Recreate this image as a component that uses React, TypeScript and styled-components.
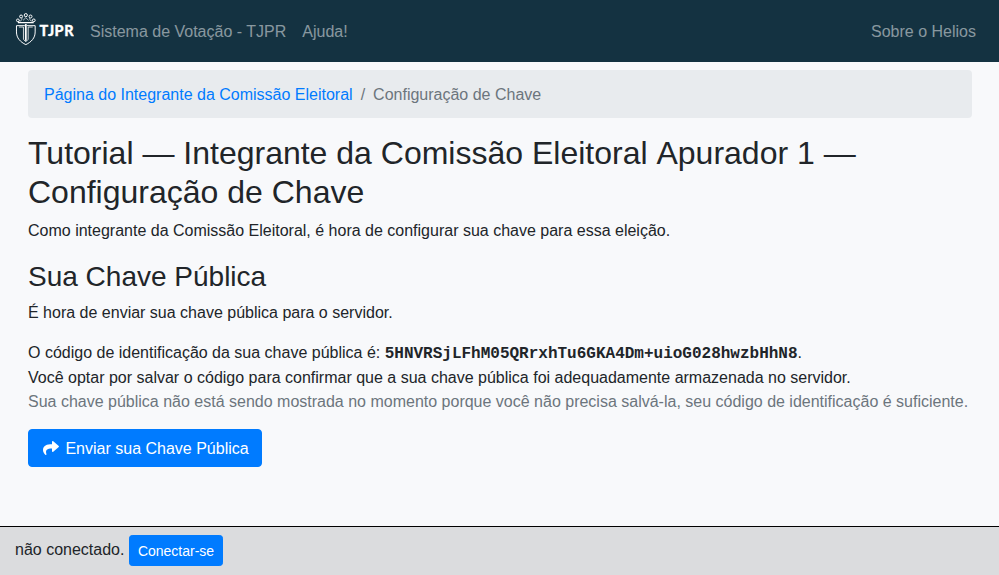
import React from "react";
import styled, { createGlobalStyle } from "styled-components";
import { FaShare } from "react-icons/fa";

const GlobalStyle = createGlobalStyle`
  *, *::before, *::after { box-sizing: border-box; }
  body {
    margin: 0;
    background: #f8f9fb;
    color: #212529;
    font-family: "Liberation Sans", Arial, sans-serif;
    font-size: 16px;
    line-height: 1.5;
  }
`;

const Page = styled.div`
  display: flex;
  flex-direction: column;
  height: 100vh;
`;

const Navbar = styled.nav`
  display: flex;
  align-items: center;
  height: 62.4px;
  flex: none;
  padding: 0 15px;
  background: #143241;
`;

const Brand = styled.a`
  display: flex;
  width: 59px;
  height: 34px;
  margin: 0 8px 4.4px 0;
`;

const NavLink = styled.a<{ $end?: boolean }>`
  padding: 9px 8px 8px;
  margin-left: ${(p) => (p.$end ? "auto" : "0")};
  color: rgba(255, 255, 255, 0.5);
  text-decoration: none;
`;

const Content = styled.main`
  flex: 1;
  padding: 8px 27px 0 28px;
`;

const Breadcrumb = styled.ol`
  display: flex;
  margin: 0 0 16px;
  padding: 13px 16px 11px;
  list-style: none;
  border-radius: 4px;
  background: #e8ebee;
`;

const Crumb = styled.li`
  color: #6c757d;

  & + &::before {
    content: "/";
    padding: 0 8px;
  }
`;

const CrumbLink = styled.a`
  color: #007bff;
  text-decoration: none;
`;

const Title = styled.h2`
  margin: 0 0 8px;
  font-size: 32px;
  font-weight: 500;
  line-height: 1.2;
`;

const Subtitle = styled.h3`
  margin: 0 0 7px;
  padding-top: 1px;
  font-size: 28px;
  font-weight: 500;
  line-height: 1.2;
`;

const Paragraph = styled.p<{ $last?: boolean }>`
  margin: 0 0 ${(p) => (p.$last ? "15px" : "16px")};
`;

const KeyCode = styled.code`
  font-family: "Liberation Mono", monospace;
  font-size: 16px;
  font-weight: 700;
`;

const Muted = styled.span`
  color: #6c757d;
`;

const Button = styled.button<{ $small?: boolean }>`
  padding: ${(p) => (p.$small ? "5px 8px 3px" : "7px 12px 5px")};
  border: 1px solid #007bff;
  border-radius: ${(p) => (p.$small ? "3.2px" : "4px")};
  background: #007bff;
  color: #fff;
  font-family: inherit;
  font-size: ${(p) => (p.$small ? "14px" : "16px")};
  line-height: 1.5;
  vertical-align: middle;
`;

const ShareIcon = styled(FaShare)`
  width: 20px;
  height: 16px;
  vertical-align: -2px;
`;

const Footer = styled.footer`
  flex: none;
  height: 49px;
  padding: 8px 15px;
  border-top: 1px solid #000;
  background: #dbdcde;
`;

function CourtLogo() {
  return (
    <svg width="60" height="34" viewBox="0 0 60 34" fill="none" stroke="#fff" aria-label="TJPR">
      <g strokeWidth="1">
        <circle cx="2.9" cy="8.2" r="1.4" />
        <circle cx="6.2" cy="4.3" r="1.5" />
        <circle cx="11" cy="2.9" r="1.6" />
        <circle cx="15.8" cy="4.3" r="1.5" />
        <circle cx="19.1" cy="8.2" r="1.4" />
        <path d="M4.2 8.6C6 9.6 7 8 7.1 6M17.8 8.6C16 9.6 15 8 14.9 6M8.2 8.2L11 5.5L13.8 8.2" strokeWidth="0.7" />
        <path d="M3 10.5H19" strokeWidth="1.3" />
        <path d="M10 13.6H1.5V20C1.5 26.2 5.4 30.2 11 32.9C16.6 30.2 20.5 26.2 20.5 20V13.6H12" />
        <path d="M4 15H8.6V27.5L11 30L13.4 27.5V15H18" strokeWidth="0.8" />
        <path d="M11 12V29" strokeWidth="1.8" />
      </g>
      <text
        x="25"
        y="24.5"
        fill="#fff"
        stroke="#fff"
        strokeWidth="0.3"
        fontFamily="Lato, sans-serif"
        fontSize="14.5"
        fontWeight="900"
        letterSpacing="0.5"
        textLength="35"
        lengthAdjust="spacingAndGlyphs"
      >
        TJPR
      </text>
    </svg>
  );
}

export default function App() {
  return (
    <>
      <GlobalStyle />
      <Page>
        <Navbar>
          <Brand>
            <CourtLogo />
          </Brand>
          <NavLink>Sistema de Votação - TJPR</NavLink>
          <NavLink>Ajuda!</NavLink>
          <NavLink $end>Sobre o Helios</NavLink>
        </Navbar>
        <Content>
          <Breadcrumb>
            <Crumb>
              <CrumbLink>Página do Integrante da Comissão Eleitoral</CrumbLink>
            </Crumb>
            <Crumb>Configuração de Chave</Crumb>
          </Breadcrumb>
          <Title>
            Tutorial — Integrante da Comissão Eleitoral{"\u00a0"}Apurador 1 — Configuração de Chave
          </Title>
          <Paragraph>
            Como integrante da Comissão Eleitoral, é hora de configurar sua chave para essa eleição.
          </Paragraph>
          <Subtitle>Sua Chave Pública</Subtitle>
          <Paragraph>É hora de enviar sua chave pública para o servidor.</Paragraph>
          <Paragraph $last>
            O código de identificação da sua chave pública é:{" "}
            <KeyCode>5HNVRSjLFhM05QRrxhTu6GKA4Dm+uioG028hwzbHhN8</KeyCode>.
            <br />
            Você optar por salvar o código para confirmar que a sua chave pública foi adequadamente
            armazenada no servidor.
            <br />
            <Muted>
              Sua chave pública não está sendo mostrada no momento porque você não precisa salvá-la,
              seu código de identificação é suficiente.
            </Muted>
          </Paragraph>
          <Button>
            <ShareIcon /> Enviar sua Chave Pública
          </Button>
        </Content>
        <Footer>
          não conectado. <Button $small>Conectar-se</Button>
        </Footer>
      </Page>
    </>
  );
}
